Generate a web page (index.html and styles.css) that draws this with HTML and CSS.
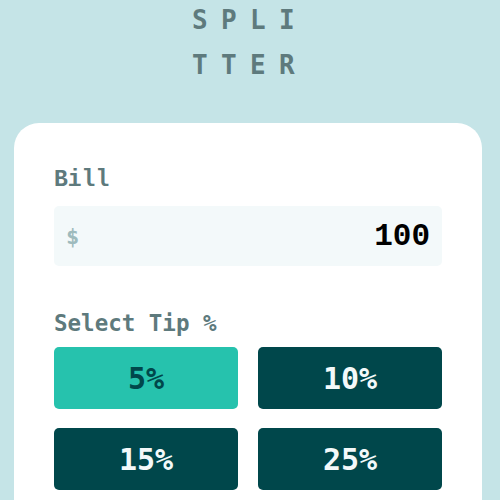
FILE: index.html
```html
<!DOCTYPE html>
<html lang="en">
<head>
<meta charset="utf-8">
<title>Splitter</title>
<link rel="stylesheet" href="styles.css">
</head>
<body>
  <h1 class="logo">SPLITTER</h1>
  <main class="card">
    <section class="field">
      <label class="label" for="bill">Bill</label>
      <div class="input-box">
        <span class="currency">$</span>
        <span class="value" id="bill">100</span>
      </div>
    </section>
    <section class="field tips">
      <div class="label label-sans">Select Tip %</div>
      <div class="tip-grid">
        <button class="tip tip-active">5%</button>
        <button class="tip">10%</button>
        <button class="tip">15%</button>
        <button class="tip">25%</button>
      </div>
    </section>
  </main>
</body>
</html>
```
FILE: styles.css
```css
* { box-sizing: border-box; }
html, body { margin: 0; padding: 0; }
body {
  background: #c5e4e7;
  width: 500px;
  height: 500px;
  overflow: hidden;
  font-family: "Liberation Mono", monospace;
}
.logo {
  width: 120px;
  margin: -2px auto 35px;
  font-family: "DejaVu Sans Mono", monospace;
  font-weight: 700;
  font-size: 26px;
  line-height: 45px;
  letter-spacing: 13.4px;
  color: #5e7a7d;
  text-align: center;
  word-break: break-all;
}
.card {
  margin: 0 18px 0 14px;
  background: #fff;
  border-radius: 25px;
  padding: 44px 40px 40px 40px;
  min-height: 400px;
}
.label {
  display: block;
  font-family: "Liberation Mono", monospace;
  font-weight: 700;
  font-size: 23px;
  line-height: 26px;
  color: #5e7a7d;
}
.label-sans {
  font-family: "DejaVu Sans Mono", monospace;
  font-size: 22.5px;
}
.input-box {
  margin-top: 13px;
  height: 60px;
  background: #f3f9fa;
  border-radius: 5px;
  display: flex;
  align-items: center;
  justify-content: space-between;
  padding: 0 12px 0 12px;
}
.currency {
  font-family: "DejaVu Sans Mono", monospace;
  font-weight: 700;
  font-size: 22px;
  color: #9ebbbd;
}
.value {
  font-family: "Liberation Mono", monospace;
  font-weight: 700;
  font-size: 31px;
  color: #000;
}
.tips { margin-top: 44px; }
.tip-grid {
  margin-top: 11px;
  display: grid;
  grid-template-columns: 1fr 1fr;
  column-gap: 20px;
  row-gap: 19px;
}
.tip {
  height: 62px;
  border: 0;
  border-radius: 5px;
  background: #00474b;
  color: #f3f9fa;
  font-family: "DejaVu Sans Mono", monospace;
  font-weight: 700;
  font-size: 30px;
  padding: 0;
}
.tip-active {
  background: #26c2ad;
  color: #00474b;
}
```
